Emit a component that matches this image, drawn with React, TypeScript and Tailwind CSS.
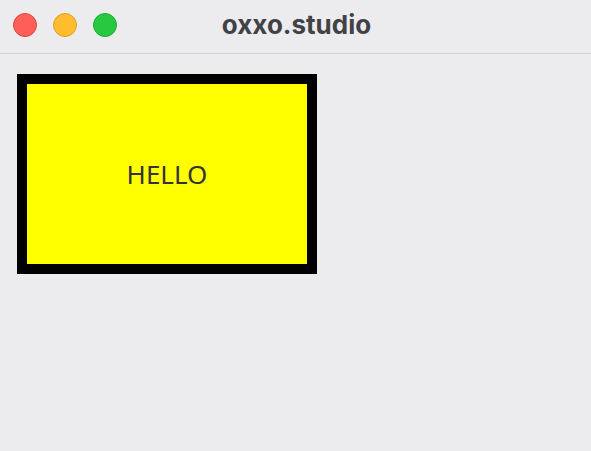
export default function App() {
  return (
    <div className="w-[591px] h-[451px] bg-[#ecebee] flex flex-col overflow-hidden" style={{ fontFamily: 'Inter, "Noto Sans", sans-serif' }}>
      {/* title bar */}
      <div className="relative h-[54px] shrink-0 bg-[#ececef] border-b border-[#d3d2d6] flex items-center justify-center">
        <div className="absolute left-[13px] top-[13px] flex gap-4">
          <span className="w-6 h-6 rounded-full bg-[#fe5f58] border border-[#e2463f]" />
          <span className="w-6 h-6 rounded-full bg-[#febc2e] border border-[#e0a028]" />
          <span className="w-6 h-6 rounded-full bg-[#28c840] border border-[#1eaa33]" />
        </div>
        <span className="text-[26px] font-bold text-[#414146] tracking-[0px] -mt-[4px] pl-[2px]">oxxo.studio</span>
      </div>

      {/* content */}
      <div className="pl-[17px] pt-[20px]">
        <div className="w-[300px] h-[200px] border-[10px] border-black bg-[#ffff00] flex items-center justify-center">
          <span className="text-[26px] text-[#333333] mt-[1px]" style={{ fontFamily: '"Noto Sans", sans-serif' }}>HELLO</span>
        </div>
      </div>
    </div>
  );
}
